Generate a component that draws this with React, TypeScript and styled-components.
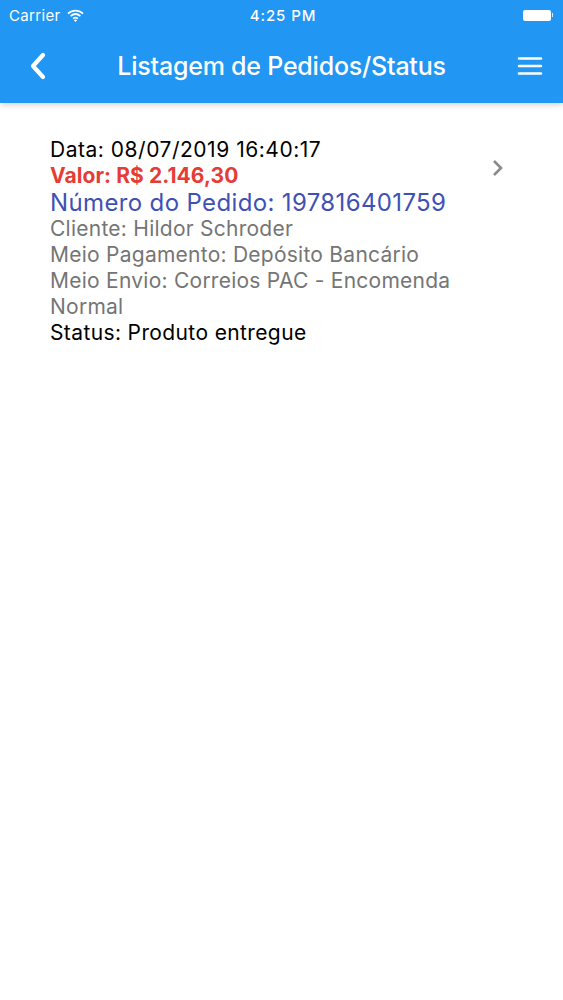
import React from "react";
import styled, { createGlobalStyle } from "styled-components";

const GlobalStyle = createGlobalStyle`
  html, body {
    margin: 0;
    padding: 0;
    background: #ffffff;
    font-family: Inter, "Liberation Sans", sans-serif;
  }
`;

const Page = styled.div`
  width: 563px;
  height: 1000px;
  overflow: hidden;
  background: #ffffff;
`;

const Header = styled.header`
  height: 103px;
  background: #2196f3;
  color: #ffffff;
  box-shadow: 0 2px 6px rgba(0, 0, 0, 0.18);
`;

const StatusBar = styled.div`
  height: 30px;
  display: grid;
  grid-template-columns: 1fr auto 1fr;
  align-items: center;
  padding: 0 10px 0 9px;
  font-size: 15px;
  letter-spacing: 0.35px;
`;

const Carrier = styled.div`
  display: flex;
  align-items: center;
  gap: 6px;
`;

const Clock = styled.div`
  margin-left: 4px;
  font-weight: 500;
  letter-spacing: 0.9px;
`;

const Battery = styled.div`
  justify-self: end;
  display: flex;
  align-items: center;
  gap: 1px;
`;

const BatteryBody = styled.div`
  width: 28px;
  height: 11px;
  border-radius: 2px;
  background: #ffffff;
`;

const BatteryTip = styled.div`
  width: 1px;
  height: 4px;
  background: rgba(255, 255, 255, 0.8);
`;

const NavBar = styled.div`
  height: 73px;
  display: grid;
  grid-template-columns: 76px 1fr 76px;
  align-items: center;
  padding-bottom: 2px;
  box-sizing: border-box;
`;

const BackButton = styled.div`
  display: flex;
  justify-content: center;
`;

const MenuButton = styled.div`
  display: flex;
  justify-content: flex-end;
  padding-right: 20px;
`;

const Title = styled.h1`
  margin: 0;
  text-align: center;
  font-size: 25px;
  font-weight: 500;
  letter-spacing: -0.22px;
  white-space: nowrap;
`;

const Order = styled.section`
  display: flex;
  align-items: flex-start;
  padding: 34px 59px 0 50px;
`;

const OrderInfo = styled.div`
  flex: 1;
  max-width: 410px;
`;

const Line = styled.div<{ $tone?: "black" | "red" | "blue" | "gray" }>`
  font-size: 21px;
  line-height: 26px;
  letter-spacing: 0.25px;
  color: ${({ $tone }) =>
    $tone === "red"
      ? "#e53d36"
      : $tone === "blue"
        ? "#3f51b5"
        : $tone === "gray"
          ? "#757575"
          : "#000000"};
`;

const DateLine = styled(Line)`
  letter-spacing: 0.52px;
`;

const StatusLine = styled(Line)`
  letter-spacing: 0.38px;
`;

const ValueLine = styled(Line)`
  font-weight: 700;
  letter-spacing: 0.07px;
`;

const OrderNumber = styled(Line)`
  font-size: 24px;
  line-height: 27px;
  letter-spacing: 0.36px;
`;

const Chevron = styled.div`
  margin: 22px 0 0 auto;
  display: flex;
`;

export default function App() {
  return (
    <Page>
      <GlobalStyle />
      <Header>
        <StatusBar>
          <Carrier>
            Carrier
            <svg width="17" height="13" viewBox="0 0 17 13" fill="none" stroke="#fff" strokeWidth="1.7">
              <path d="M1 4.6C5.4 .5 11.6 .5 16 4.6" />
              <path d="M3.6 7.2c3-2.7 6.8-2.7 9.8 0" />
              <path d="M6.1 9.6c1.5-1.2 3.3-1.2 4.8 0" />
              <path d="M8.5 13l-1.7-2c1-.7 2.4-.7 3.4 0z" fill="#fff" stroke="none" />
            </svg>
          </Carrier>
          <Clock>4:25 PM</Clock>
          <Battery>
            <BatteryBody />
            <BatteryTip />
          </Battery>
        </StatusBar>
        <NavBar>
          <BackButton>
            <svg width="20" height="28" viewBox="0 0 20 28" fill="none" stroke="#fff" strokeWidth="4.2" strokeLinecap="round" strokeLinejoin="round">
              <path d="M15 3 5 14l10 11" />
            </svg>
          </BackButton>
          <Title>Listagem de Pedidos/Status</Title>
          <MenuButton>
            <svg width="26" height="20" viewBox="0 0 26 20" fill="none" stroke="#fff" strokeWidth="2.6" strokeLinecap="round">
              <path d="M2 2.5h22M2 10h22M2 17.5h22" />
            </svg>
          </MenuButton>
        </NavBar>
      </Header>
      <Order>
        <OrderInfo>
          <DateLine>Data: 08/07/2019 16:40:17</DateLine>
          <ValueLine $tone="red">Valor: R$ 2.146,30</ValueLine>
          <OrderNumber $tone="blue">Número do Pedido: 197816401759</OrderNumber>
          <Line $tone="gray">Cliente: Hildor Schroder</Line>
          <Line $tone="gray">Meio Pagamento: Depósito Bancário</Line>
          <Line $tone="gray">Meio Envio: Correios PAC - Encomenda Normal</Line>
          <StatusLine>Status: Produto entregue</StatusLine>
        </OrderInfo>
        <Chevron>
          <svg width="12" height="18" viewBox="0 0 12 18" fill="none" stroke="#8a8a8a" strokeWidth="2.6">
            <path d="M2 2l7 7-7 7" />
          </svg>
        </Chevron>
      </Order>
    </Page>
  );
}
